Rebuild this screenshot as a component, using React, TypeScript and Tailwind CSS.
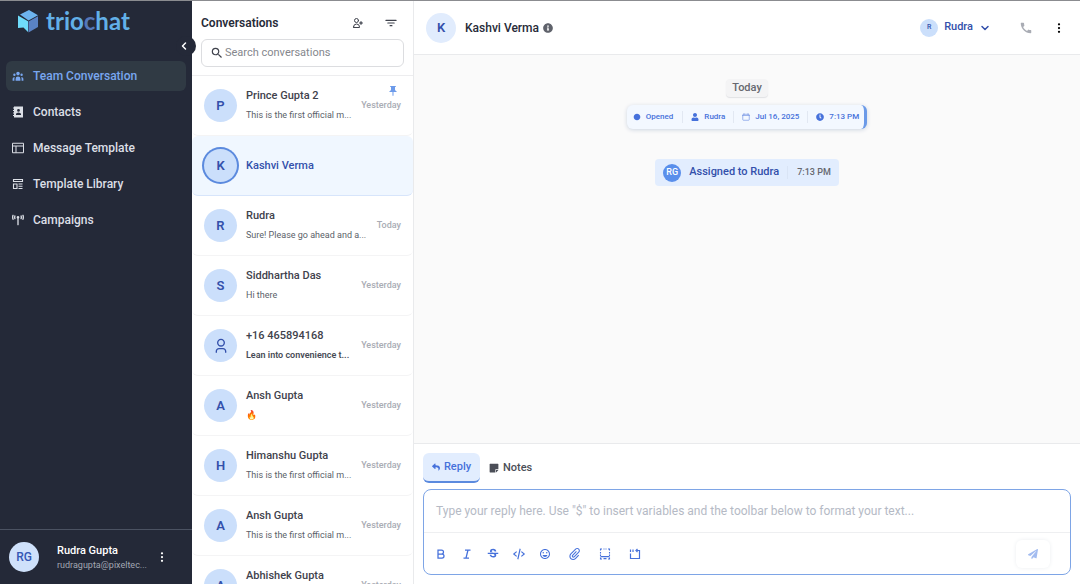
import React, { useState } from "react";
import { FaClock, FaInfoCircle, FaPaperPlane, FaReply, FaStickyNote, FaUser } from "react-icons/fa";
import { FaTowerBroadcast } from "react-icons/fa6";
import { BiCodeAlt } from "react-icons/bi";
import { BsThreeDotsVertical } from "react-icons/bs";
import { FiChevronDown, FiChevronLeft } from "react-icons/fi";
import { HiOutlineUserAdd, HiUserGroup } from "react-icons/hi";
import { ImAttachment } from "react-icons/im";
import { IoCalendarClearOutline, IoFilter } from "react-icons/io5";
import {
  MdCall,
  MdCircle,
  MdOutlineEmojiEmotions,
  MdPushPin,
  MdSearch,
  MdStrikethroughS,
} from "react-icons/md";
import { RiUser3Line } from "react-icons/ri";

type Conversation = {
  id: number;
  name: string;
  initial?: string;
  preview?: string;
  time?: string;
  pinned?: boolean;
  unread?: boolean;
};

const conversations: Conversation[] = [
  { id: 1, name: "Prince Gupta 2", initial: "P", preview: "This is the first official m...", time: "Yesterday", pinned: true },
  { id: 2, name: "Kashvi Verma", initial: "K" },
  { id: 3, name: "Rudra", initial: "R", preview: "Sure! Please go ahead and a...", time: "Today" },
  { id: 4, name: "Siddhartha Das", initial: "S", preview: "Hi there", time: "Yesterday" },
  { id: 5, name: "+16 465894168", preview: "Lean into convenience t...", time: "Yesterday", unread: true },
  { id: 6, name: "Ansh Gupta", initial: "A", preview: "🔥", time: "Yesterday" },
  { id: 7, name: "Himanshu Gupta", initial: "H", preview: "This is the first official m...", time: "Yesterday" },
  { id: 8, name: "Ansh Gupta", initial: "A", preview: "This is the first official m...", time: "Yesterday" },
  { id: 9, name: "Abhishek Gupta", initial: "A", preview: "This is the first official m...", time: "Yesterday" },
];

const ContactsIcon = () => (
  <svg viewBox="0 0 24 24" className="size-3" fill="currentColor">
    <path
      fillRule="evenodd"
      d="M4 1h18v22H4v-3H2v-2h2v-3H2v-2h2v-3H2V8h2V5H2V3h2zM13 6a2.800 2.800 0 1 0 0 5.600A2.800 2.800 0 0 0 13 6zM8 18h10v-1.500c0-2-3-3.500-5-3.500s-5 1.500-5 3.500z"
    />
  </svg>
);

const LayoutIcon = () => (
  <svg viewBox="0 0 24 24" className="size-3" fill="none" stroke="currentColor" strokeWidth="2">
    <path d="M1 2.5h22v19H1zM1 8h22M8 8v13.5" />
  </svg>
);

const LibraryIcon = () => (
  <svg viewBox="0 0 24 24" className="size-3" fill="none" stroke="currentColor" strokeWidth="2.2">
    <path d="M3 3h18v4H3zM3 12h7v9H3zM13 12h8M13 16.5h8M13 21h8" />
  </svg>
);

const BoldIcon = () => (
  <svg viewBox="0 0 24 24" className="size-3" fill="none" stroke="currentColor" strokeWidth="2.5">
    <path d="M6 4h7a4 4 0 0 1 0 8H6zM6 12h8a4 4 0 0 1 0 8H6z" />
  </svg>
);

const ItalicIcon = () => (
  <svg viewBox="0 0 24 24" className="size-3" fill="none" stroke="currentColor" strokeWidth="2.5">
    <path d="M8 4h11M5 20h11M14 4l-4 16" />
  </svg>
);

const TemplateIcon = () => (
  <svg viewBox="0 0 24 24" className="size-3" fill="none" stroke="currentColor" strokeWidth="2.2">
    <path d="M3 5V2h3M9 2h2M13 2h2M18 2h3v3M3 8v3M3 13v3M21 8v3M21 13v3M3 19v3h3M21 19v3h-3" />
    <path d="M3 17h18M9 21h6" strokeWidth="2.5" />
  </svg>
);

const QuickReplyIcon = () => (
  <svg viewBox="0 0 24 24" className="size-3" fill="none" stroke="currentColor" strokeWidth="2.4">
    <path d="M3 11v10h18V5h-6" />
    <path d="M3 3v5M8 3v5M17 2l-3 3 3 3" />
  </svg>
);

const Logo = () => (
  <a href="#" className="flex items-center gap-[7px]" aria-label="triochat">
    <svg viewBox="0 0 22 24" className="h-6 w-[22px]">
      <path d="M12 1 21 6.200 11.500 11.500 3 5.500z" fill="#6db3ee" />
      <path d="M1 6.500 11 12.200V23l-4.500-4.500L1 19z" fill="#6fdcfb" />
      <path d="M11.500 12.500 21 7.200V18l-9.500 5.500z" fill="#5a82c4" />
    </svg>
    <span className="font-[Lato,sans-serif] text-2xl leading-6 font-bold text-[#62b0e8]">
      trio<span className="text-[#5577b8]">c</span>hat
    </span>
  </a>
);

const navItems = [
  { label: "Team Conversation", icon: <HiUserGroup className="size-3" /> },
  { label: "Contacts", icon: <ContactsIcon /> },
  { label: "Message Template", icon: <LayoutIcon /> },
  { label: "Template Library", icon: <LibraryIcon /> },
  { label: "Campaigns", icon: <FaTowerBroadcast className="size-3" /> },
];

const textTools = [
  { label: "Bold", icon: <BoldIcon /> },
  { label: "Italic", icon: <ItalicIcon /> },
  { label: "Strikethrough", icon: <MdStrikethroughS className="size-3.5" /> },
  { label: "Code", icon: <BiCodeAlt className="size-3.5" /> },
  { label: "Emoji", icon: <MdOutlineEmojiEmotions className="size-3" /> },
];

const insertTools = [
  { label: "Attach file", icon: <ImAttachment className="size-3" /> },
  { label: "Template", icon: <TemplateIcon /> },
  { label: "Quick reply", icon: <QuickReplyIcon /> },
];

const ToolButton: React.FC<{ label: string; icon: React.ReactNode }> = ({ label, icon }) => (
  <button type="button" aria-label={label} className="flex size-4 items-center justify-center">
    {icon}
  </button>
);

const Sidebar: React.FC = () => (
  <aside className="relative z-10 flex w-48 shrink-0 flex-col bg-[#242938]">
    <div className="flex h-[60px] items-start px-[17px] pt-2">
      <Logo />
    </div>
    <button
      type="button"
      aria-label="Collapse sidebar"
      className="absolute top-[35px] -right-1 flex size-5 items-center justify-start rounded-full bg-[#242938] pl-0.5 text-white"
    >
      <FiChevronLeft className="size-3" strokeWidth={3} />
    </button>
    <nav className="flex flex-1 flex-col gap-1.5 px-1.5">
      {navItems.map((item, i) => (
        <a
          key={item.label}
          href="#"
          className={`flex h-[30px] items-center gap-[9px] rounded-md px-1.5 text-[12px] font-medium ${
            i === 0 ? "bg-[#303a44] text-[#79a7f0]" : "text-[#dcdfe6]"
          }`}
        >
          {item.icon}
          {item.label}
        </a>
      ))}
    </nav>
    <div className="flex h-[55px] items-center border-t border-[#4b5262] pr-6 pl-[9px]">
      <span className="flex size-[30px] shrink-0 items-center justify-center rounded-full bg-[#cfe1fb] text-[12px] font-medium text-[#3557b5]">
        RG
      </span>
      <div className="ml-[18px] min-w-0 flex-1">
        <p className="text-[11px] leading-4 font-medium text-white">Rudra Gupta</p>
        <p className="text-[9px] leading-3 whitespace-nowrap text-[#a2a7b3]">rudragupta@pixeltec...</p>
      </div>
      <button type="button" aria-label="Account menu" className="text-white">
        <BsThreeDotsVertical className="size-3" />
      </button>
    </div>
  </aside>
);

const ConversationRow: React.FC<{ item: Conversation; active: boolean; onSelect: () => void }> = ({
  item,
  active,
  onSelect,
}) => (
  <li>
    <button
      type="button"
      onClick={onSelect}
      className={`flex h-[60px] w-full items-center rounded-md border-b px-3 text-left ${
        active ? "border-[#d7e5fb] bg-[#f0f7ff]" : "border-[#f4f4f5]"
      }`}
    >
      <span
        className={`flex size-[33px] shrink-0 items-center justify-center rounded-full bg-[#cbdffb] text-[13px] font-semibold text-[#3350ab] ${
          active ? "ring-2 ring-[#5b8ade]" : ""
        }`}
      >
        {item.initial ?? <RiUser3Line className="size-4" />}
      </span>
      <span className="ml-[9px] min-w-0 flex-1 whitespace-nowrap">
        <span
          className={`block text-[11px] leading-5 font-medium ${
            active ? "text-[#3350ab]" : "text-[#3f424c]"
          }`}
        >
          {item.name}
        </span>
        {item.preview && (
          <span
            className={`block text-[9px] leading-[19px] ${
              item.unread ? "font-semibold text-[#474b55]" : "text-[#5b5f69]"
            }`}
          >
            {item.preview}
          </span>
        )}
      </span>
      {item.time && (
        <span className="relative text-[9px] font-medium text-[#a9acb4]">
          {item.pinned && <MdPushPin className="absolute right-0.5 bottom-full mb-0.5 size-3 text-[#6d9bea]" />}
          {item.time}
        </span>
      )}
    </button>
  </li>
);

const App: React.FC = () => {
  const [selected, setSelected] = useState(2);
  const [search, setSearch] = useState("");
  const [reply, setReply] = useState("");

  return (
    <div className="flex h-screen overflow-hidden border-t border-[#8b8c90] bg-white font-[Roboto,sans-serif]">
      <Sidebar />

      {/* Conversation list */}
      <section className="flex w-[222px] shrink-0 flex-col border-r border-[#e9eaec]">
        <div className="border-b border-[#ededef] px-[9px] pb-2">
          <div className="flex h-[38px] items-center pt-1.5">
            <h1 className="flex-1 text-[12px] font-semibold text-[#272b38]">Conversations</h1>
            <button type="button" aria-label="New contact" className="text-[#3f424c]">
              <HiOutlineUserAdd className="size-3" />
            </button>
            <button type="button" aria-label="Filter" className="mr-[7px] ml-[21px] text-[#3f424c]">
              <IoFilter className="size-3" />
            </button>
          </div>
          <label className="flex h-7 items-center gap-px rounded-md border border-[#dcdde0] px-2">
            <MdSearch className="size-3.5 text-[#3f424c]" />
            <input
              type="search"
              aria-label="Search conversations"
              value={search}
              onChange={(e) => setSearch(e.target.value)}
              placeholder="Search conversations"
              className="min-w-0 flex-1 text-[11px] outline-none placeholder:text-[#85878d]"
            />
          </label>
        </div>
        <ul className="min-h-0 flex-1 overflow-hidden">
          {conversations.map((item) => (
            <ConversationRow
              key={item.id}
              item={item}
              active={item.id === selected}
              onSelect={() => setSelected(item.id)}
            />
          ))}
        </ul>
      </section>

      {/* Chat */}
      <main className="flex min-w-0 flex-1 flex-col">
        <header className="flex h-[54px] items-center border-b border-[#e9eaec] px-3">
          <span className="flex size-[30px] items-center justify-center rounded-full bg-[#e1ecfd] text-[13px] font-semibold text-[#3350ab]">
            K
          </span>
          <h2 className="ml-[9px] text-[12px] font-medium text-[#272b38]">Kashvi Verma</h2>
          <button type="button" aria-label="Contact details" className="ml-1 text-[#5f626b]">
            <FaInfoCircle className="size-2.5" />
          </button>
          <button type="button" className="ml-auto flex items-center text-[11px] font-medium text-[#3350ab]">
            <span className="mr-1.5 flex size-[18px] items-center justify-center rounded-full bg-[#cbdffb] text-[7px]">
              R
            </span>
            Rudra
            <FiChevronDown className="ml-1.5 size-3" strokeWidth={3} />
          </button>
          <button type="button" aria-label="Call" className="ml-7 text-[#a9acb4]">
            <MdCall className="size-3.5" />
          </button>
          <button type="button" aria-label="More" className="mr-[3px] ml-5 text-black">
            <BsThreeDotsVertical className="size-3" />
          </button>
        </header>

        <div className="flex flex-1 flex-col items-center bg-[#fafafa] pt-6">
          <span className="rounded-sm bg-[#f4f4f5] px-1.5 text-[11px] leading-[18px] font-medium text-[#66686f] shadow-[0_1px_1px_#e0e1e4]">
            Today
          </span>
          <div className="mt-2 flex h-6 items-center divide-x divide-[#e2e8f2] rounded-md border-r-3 border-[#6b9ae8] bg-[#f3f8ff] text-[8px] font-medium text-[#4671db] shadow-[0_1px_4px_#cdd5e0]">
            <span className="flex items-center gap-[5px] pr-[9px] pl-1.5">
              <MdCircle className="size-2" />
              Opened
            </span>
            <span className="flex items-center gap-[5px] px-2">
              <FaUser className="size-2" />
              Rudra
            </span>
            <span className="flex items-center gap-[5px] px-2">
              <IoCalendarClearOutline className="size-2" />
              Jul 16, 2025
            </span>
            <span className="flex items-center gap-[5px] pr-[5px] pl-2">
              <FaClock className="size-2" />
              7:13 PM
            </span>
          </div>
          <div className="mt-[30px] flex h-[27px] items-center rounded bg-[#e2edfe] px-2">
            <span className="flex size-[18px] items-center justify-center rounded-full bg-[#5a8feb] text-[9px] font-medium text-white">
              RG
            </span>
            <span className="ml-2 text-[11px] font-medium text-[#3350ab]">Assigned to Rudra</span>
            <span className="ml-2 border-l border-[#d9e4f5] pl-[9px] text-[9px] font-medium text-[#66686f]">
              7:13 PM
            </span>
          </div>
        </div>

        {/* Composer */}
        <div className="border-t border-[#e9eaec] p-[9px]">
          <div className="flex items-center gap-[9px] text-[11px] font-medium">
            <button
              type="button"
              className="flex h-[30px] w-[57px] items-center justify-center gap-1 rounded-md border-b-2 border-[#5b8ade] bg-[#e2edfe] text-[#4671db]"
            >
              <FaReply className="size-2" />
              Reply
            </button>
            <button type="button" className="flex items-center gap-1 text-[#4b4e57]">
              <FaStickyNote className="size-2.5" />
              Notes
            </button>
          </div>
          <div className="mt-1.5 rounded-lg border border-[#7ea5e6]">
            <textarea
              aria-label="Reply"
              rows={1}
              value={reply}
              onChange={(e) => setReply(e.target.value)}
              placeholder={'Type your reply here. Use "$" to insert variables and the toolbar below to format your text...'}
              className="block h-[42px] w-full resize-none px-3 py-3 text-[12px] leading-[18px] outline-none placeholder:text-[#b5bac5]"
            />
            <div className="flex h-[42px] items-center border-t border-[#eeeff1] pr-5 pl-[9px] text-[#4671db]">
              <div className="flex flex-1 items-center gap-3.5">
                <div className="flex gap-2.5">
                  {textTools.map((tool) => (
                    <ToolButton key={tool.label} {...tool} />
                  ))}
                </div>
                {insertTools.map((tool) => (
                  <ToolButton key={tool.label} {...tool} />
                ))}
              </div>
              <button
                type="button"
                aria-label="Send"
                className="flex h-7 w-[34px] items-center justify-center rounded-md text-[#a3bcf0] shadow-[0_0_4px_#eceef1]"
              >
                <FaPaperPlane className="size-2.5" />
              </button>
            </div>
          </div>
        </div>
      </main>
    </div>
  );
};

export default App;
